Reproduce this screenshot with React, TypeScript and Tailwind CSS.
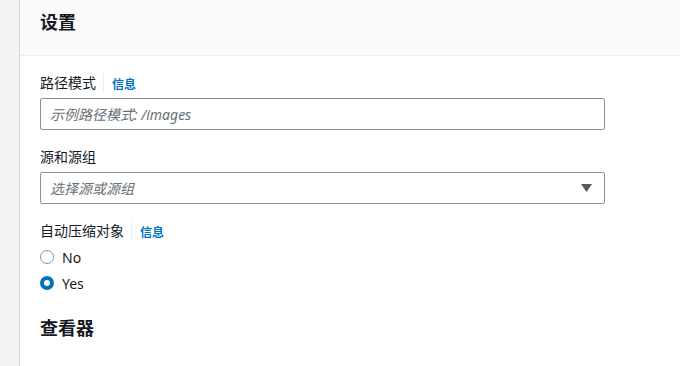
import React, { useState } from 'react';

const font = { fontFamily: '"Noto Sans", "Noto Sans CJK SC", sans-serif' };

function FieldLabel({ text, info }: { text: string; info?: boolean }) {
  return (
    <div className="flex items-baseline h-5 leading-5 text-[14px] text-[#16191f]">
      <span>{text}</span>
      {info && (
        <>
          <span className="ml-[7px] mr-[8px] h-[18px] w-px bg-[#eaeded] self-center" />
          <span className="text-[12px] font-bold text-[#0073bb] translate-y-[1px]">信息</span>
        </>
      )}
    </div>
  );
}

function Radio({ label, checked, onClick }: { label: string; checked: boolean; onClick: () => void }) {
  return (
    <button type="button" onClick={onClick} className="flex items-center h-6 gap-2 text-[14px] text-[#16191f]">
      {checked ? (
        <span className="w-[14px] h-[14px] rounded-full border-[4px] border-[#0073bb] bg-white" />
      ) : (
        <span className="w-[14px] h-[14px] rounded-full border-[1.5px] border-[#879596] bg-white" />
      )}
      <span>{label}</span>
    </button>
  );
}

export default function App() {
  const [compress, setCompress] = useState('yes');

  return (
    <div className="flex w-[680px] h-[366px] bg-white overflow-hidden" style={font}>
      <div className="w-[20px] shrink-0 bg-[#f2f3f3] border-r border-[#d5dbdb]" />
      <div className="flex-1">
        {/* Header */}
        <div className="h-[56px] bg-[#fafafa] border-b border-[#eaeded] px-5 pt-[10px]">
          <h2 className="text-[18px] leading-6 font-bold text-[#16191f]">设置</h2>
        </div>

        {/* Body */}
        <div className="px-5 pt-[17px]">
          <FieldLabel text="路径模式" info />
          <input
            className="mt-[5px] w-[565px] h-[32px] px-[9px] border border-[#879596] rounded-[2px] text-[14px] italic placeholder:text-[#687078] outline-none"
            placeholder="示例路径模式: /images"
          />

          <div className="mt-[17px]">
            <FieldLabel text="源和源组" />
          </div>
          <div className="mt-[5px] w-[565px] h-[32px] pl-[9px] pr-[12px] border border-[#879596] rounded-[2px] flex items-center justify-between">
            <span className="text-[14px] italic text-[#687078]">选择源或源组</span>
            <svg width="11" height="8" viewBox="0 0 11 8">
              <path d="M0 0 H11 L5.5 8 Z" fill="#545b64" />
            </svg>
          </div>

          <div className="mt-[17px]">
            <FieldLabel text="自动压缩对象" info />
          </div>
          <div className="mt-[4px] flex flex-col gap-[2px] items-start">
            <Radio label="No" checked={compress === 'no'} onClick={() => setCompress('no')} />
            <Radio label="Yes" checked={compress === 'yes'} onClick={() => setCompress('yes')} />
          </div>

          <h2 className="mt-[21px] text-[18px] leading-6 font-bold text-[#16191f]">查看器</h2>
        </div>
      </div>
    </div>
  );
}
